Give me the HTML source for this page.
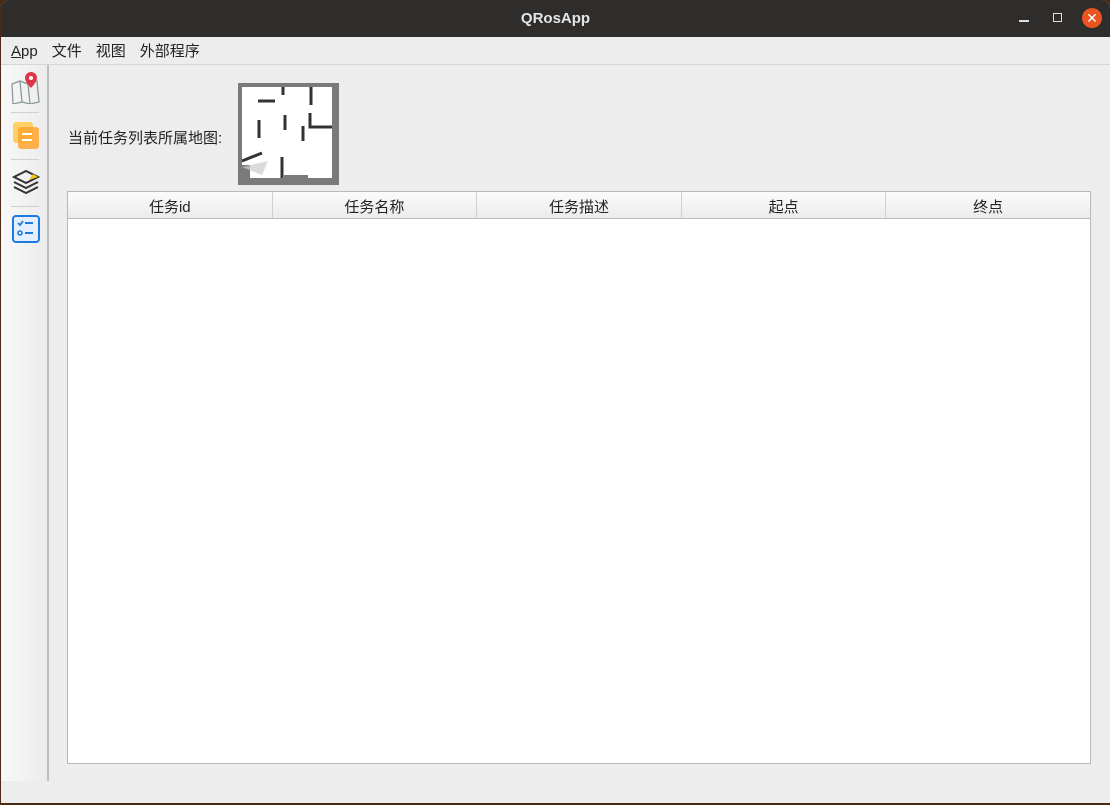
<!DOCTYPE html>
<html><head><meta charset="utf-8"><style>
*{margin:0;padding:0;box-sizing:border-box}
body{width:1110px;height:805px;overflow:hidden;background:#4a2a14;font-family:"Liberation Sans","Noto Sans CJK SC",sans-serif;font-size:15px;color:#222}
.win{position:absolute;left:1px;top:0;width:1109px;height:803px;background:#ededed;border-radius:8px 8px 0 0;overflow:hidden}
.title{height:37px;background:#2f2d2c;color:#e6e6e6;font-weight:bold;font-size:15px;text-align:center;line-height:37px;position:relative}
.menu{height:28px;line-height:30px;padding-left:10px;font-size:15px;border-bottom:1px solid #d6d6d6}
.menu span{margin-right:14px}
.side{position:absolute;left:0;top:65px;width:48px;height:716px;border-right:2px solid #bdbdbd;background:linear-gradient(90deg,#f8f8f8,#ececec)}
.sep{position:absolute;left:10px;width:28px;height:1px;background:#d0d0d0}
.lbl{position:absolute;left:67px;top:127px;font-size:15px}
.map{position:absolute;left:237px;top:83px;width:101px;height:102px;background:#7a7a7a}
.tbl{position:absolute;left:66px;top:191px;width:1024px;height:573px;border:1px solid #b9b9b9;background:#fff}
.hdr{display:flex;height:27px;border-bottom:1px solid #b9b9b9;background:linear-gradient(#fbfbfb,#ececec)}
.hdr div{flex:1;text-align:center;line-height:31px;border-right:1px solid #d0d0d0;font-size:15px}
.hdr div:last-child{border-right:none}
</style></head><body><div class="win">
<div class="title">QRosApp
<span style="position:absolute;left:1018px;top:20px;width:10px;height:1.5px;background:#ddd"></span>
<span style="position:absolute;left:1052px;top:13px;width:9px;height:9px;border:1.5px solid #ddd"></span>
<span style="position:absolute;left:1081px;top:8px;width:20px;height:20px;border-radius:50%;background:#e95420;color:#fff;font-size:14px;line-height:20px;font-weight:normal">✕</span>
</div>
<div class="menu"><span><u>A</u>pp</span><span>文件</span><span>视图</span><span>外部程序</span></div>
<div class="side">
<svg style="position:absolute;left:9px;top:7px" width="32" height="32" viewBox="0 0 32 32"><path d="M2 12 L10 9 L18 12 L27 9 L29 30 L20 32 L12 30 L3 32 Z" fill="none" stroke="#8a9a98" stroke-width="1.3"/><path d="M10 9 L12 30 M18 12 L20 32" stroke="#8a9a98" stroke-width="1.3"/><path d="M21 0 a6 6 0 0 1 6 6 c0 4 -6 10 -6 10 c0 0 -6 -6 -6 -10 a6 6 0 0 1 6 -6z" fill="#e03546"/><circle cx="21" cy="6" r="2" fill="#fff"/></svg>
<div class="sep" style="top:47px"></div>
<svg style="position:absolute;left:11px;top:56px" width="28" height="30"><rect x="1" y="1" width="20" height="21" rx="3" fill="#ffc94d" opacity=".85"/><rect x="6" y="6" width="21" height="22" rx="3" fill="#ffa530" opacity=".85"/><rect x="10" y="12" width="10" height="2" fill="#fff"/><rect x="10" y="18" width="10" height="2" fill="#fff"/></svg>
<div class="sep" style="top:94px"></div>
<svg style="position:absolute;left:10px;top:103px" width="30" height="28"><path d="M3 9 L15 3 L27 9 L15 15 Z" fill="none" stroke="#333" stroke-width="2"/><path d="M18 12 L27 9 L22 6" fill="#f5c518"/><path d="M3 14 L15 20 L27 14 M3 19 L15 25 L27 19" fill="none" stroke="#333" stroke-width="2"/></svg>
<div class="sep" style="top:141px"></div>
<svg style="position:absolute;left:10px;top:150px" width="30" height="30"><rect x="2" y="1" width="26" height="26" rx="3" fill="#e4effd" stroke="#1f7ae0" stroke-width="2"/><path d="M7 8 L9 10 L12 6" fill="none" stroke="#1f7ae0" stroke-width="1.8"/><rect x="14" y="7" width="8" height="2" fill="#1f7ae0"/><circle cx="9" cy="18" r="2" fill="none" stroke="#1f7ae0" stroke-width="1.6"/><rect x="14" y="17" width="8" height="2" fill="#1f7ae0"/></svg>
</div>
<div class="lbl">当前任务列表所属地图:</div>
<div class="map"><svg width="101" height="102"><path d="M4 4 H94 V95 H70 V92 H46 V95 H12 V82 H4 Z" fill="#fff"/><path d="M20 18 H37 M21 37 V55 M47 32 V47 M65 43 V58 M72 30 V44 H94 M73 4 V22 M45 4 V12 M44 74 V95 M4 78 L24 70" stroke="#333" stroke-width="3" fill="none"/><path d="M4 84 L30 78 L24 92 Z" fill="#ccc" opacity=".7"/></svg></div>
<div class="tbl"><div class="hdr"><div>任务id</div><div>任务名称</div><div>任务描述</div><div>起点</div><div>终点</div></div></div>
</div></body></html>
